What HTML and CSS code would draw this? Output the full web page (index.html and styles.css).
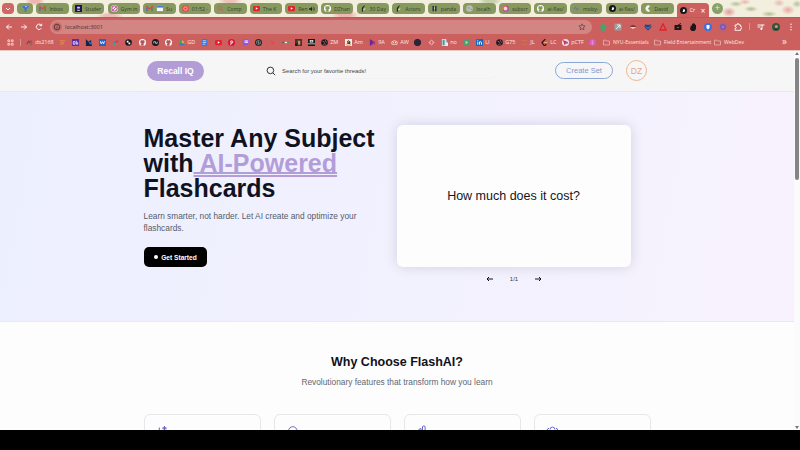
FILE: index.html
```
<!DOCTYPE html>
<html lang="en">
<head>
<meta charset="utf-8">
<title>Recall IQ</title>
<link rel="stylesheet" href="styles.css">
</head>
<body>
<svg class="defs" aria-hidden="true">
  <symbol id="gmail" viewBox="0 0 8 8"><path d="M1 7V2l3 2.500L7 2v5" fill="none" stroke="#d94a45" stroke-width="1.500"/><path d="M1 3v4" stroke="#4774d8" stroke-width="1.500"/><path d="M7 3v4" stroke="#3c9b55" stroke-width="1.500"/></symbol>
  <symbol id="github" viewBox="0 0 16 16"><circle cx="8" cy="8" r="8" fill="#fff"/><path d="M6 15v-3c-2 .4-2.500-.8-3.200-1.500M10 15v-3.500c0-.8-.2-1.200-.5-1.500 2-.3 3-1.200 3-3.300 0-.8-.3-1.500-.8-2 .1-.5.1-1.200-.1-1.700-.8 0-1.500.4-2.100.8a7 7 0 0 0-3 0c-.6-.4-1.300-.8-2.100-.8-.2.500-.2 1.200-.1 1.700-.5.500-.8 1.200-.8 2 0 2.100 1 3 3 3.300-.3.300-.5.700-.5 1.500V15z" fill="currentColor" stroke="currentColor"/></symbol>
  <symbol id="yt" viewBox="0 0 8 8"><rect y="1" width="8" height="6" rx="1.500" fill="#e4212d"/><path d="M3.200 2.600v2.800L5.600 4z" fill="#fff"/></symbol>
  <symbol id="disc" viewBox="0 0 8 8"><circle cx="4" cy="4" r="4" fill="#16181b"/><path d="M4 2.300a1.700 1.700 0 1 1-1 3z" fill="#fff"/></symbol>
  <symbol id="ball" viewBox="0 0 8 8"><circle cx="4" cy="4" r="3.800" fill="#1c1a20"/><path d="M1.500 2.500l2 .5L4 5M5 1.200l.5 2L7 4M2.500 6.500l2-1 1.500 1" stroke="#c27577" stroke-width=".7" fill="none"/></symbol>
  <symbol id="folder" viewBox="0 0 8 8"><path d="M.6 6.800V1.300h2.500l.9 1h3.400v4.500z" fill="none" stroke="#f4cfca" stroke-width=".7"/></symbol>
  <symbol id="feather" viewBox="0 0 8 8"><path d="M6 .4C2.500 1.500 1.500 4 2.200 7.500l1.300.1C2.700 5 3.500 3 6 .4z" fill="#171c18"/><path d="M3.700 5.500L6 4.300" stroke="#f3f3e4"/></symbol>
</svg>
<div class="screen">
  <div class="tabs">
    <span class="tab-menu"><svg viewBox="0 0 8 8"><path d="M2 3l2 2 2-2" fill="none" stroke="#fff"/></svg></span>
    <span class="tab pinned"><svg viewBox="0 0 8 8"><path d="M0 1h8L5 4.500V8L3 7V4.500z" fill="#3b6fd8"/><path d="M3 1h3L4.500 3z" fill="#a4c6ff"/></svg></span>
    <span class="tab"><svg><use href="#gmail"/></svg><b>Inbox</b></span>
    <span class="tab"><svg viewBox="0 0 8 8"><path d="M0 0h8v8H0z" fill="#231255"/><path d="M2.500 2h3v2h-3zM2.500 5.500h3v1h-3z" fill="#e6dcfb"/></svg><b>Studer</b></span>
    <span class="tab"><svg viewBox="0 0 8 8"><circle cx="4" cy="4" r="4" fill="#f4e5ef"/><circle cx="4" cy="4" r="3" fill="none" stroke="#a53a8d"/><path d="M1.500 6.500l5-5" stroke="#c54f79"/></svg><b>Gym in</b></span>
    <span class="tab"><svg><use href="#gmail"/></svg><svg viewBox="0 0 8 8"><path d="M1 1h7v6H1z" fill="#f3f7ff"/><path d="M1 1h7v2H1z" fill="#497cd6"/></svg><b>Su</b></span>
    <span class="tab"><svg viewBox="0 0 8 8"><circle cx="4" cy="4" r="4" fill="#e34b49"/><circle cx="4" cy="4" r="2" fill="none" stroke="#f7b3ae"/></svg><b>01:52 -</b></span>
    <span class="tab"><svg viewBox="0 0 8 8"><circle cx="3.500" cy="3.500" r="2.200" fill="none" stroke="#b8655d"/><path d="M5 5l2.500 2.500" stroke="#b8655d"/></svg><b>Comp</b></span>
    <span class="tab"><svg><use href="#yt"/></svg><b>The K</b></span>
    <span class="tab"><svg><use href="#yt"/></svg><b class="short">Ren</b><svg class="sound" viewBox="0 0 8 8"><path d="M0 3h2l2-2v6L2 5H0z" fill="#20291c"/><path d="M5 2.500q1.500 1.500 0 3M6 1q3 3 0 6" fill="none" stroke="#20291c" stroke-width=".7"/></svg></span>
    <span class="tab"><svg><use href="#github"/></svg><b>DZhan</b></span>
    <span class="tab"><svg><use href="#feather"/></svg><b>30 Day</b></span>
    <span class="tab"><svg><use href="#feather"/></svg><b>Actors</b></span>
    <span class="tab"><svg viewBox="0 0 8 8"><path d="M2.500 1v6M5.500 1v6" stroke="#1c1c49" stroke-width="1.500"/><path d="M3.400 3.500h1.300" stroke="#fff"/></svg><b>panda</b></span>
    <span class="tab"><svg viewBox="0 0 8 8"><circle cx="4" cy="4" r="3.800" fill="#b9bdb4"/><path d="M2 2l2 1-1 2zM5 4l2 1-1 1z" fill="#8c9484"/></svg><b>localh</b></span>
    <span class="tab"><svg viewBox="0 0 8 8"><circle cx="4" cy="4" r="3" fill="#f5d5dd" stroke="#b34c9b" stroke-width="1.500"/><path d="M1.500 6A3 3 0 0 1 4 1" fill="none" stroke="#e77a45" stroke-width="1.500"/></svg><b>subscr</b></span>
    <span class="tab"><svg><use href="#github"/></svg><b>ai-flas/</b></span>
    <span class="tab"><svg viewBox="0 0 8 8"><path d="M1 5l2-3 1 4 1-2 2 1" stroke="#5b78a7" fill="none"/></svg><b>moby-</b></span>
    <span class="tab"><svg><use href="#disc"/></svg><b>ai-flas/</b></span>
    <span class="tab"><svg viewBox="0 0 8 8"><path d="M7 1a3.500 3.500 0 1 0 0 6L4.500 4z" fill="#f1f4e6"/></svg><b>David</b></span>
    <span class="tab active"><svg><use href="#disc"/></svg><b>Cr</b><i>×</i></span>
    <span class="new-tab">+</span>
  </div>
  <div class="toolbar">
    <svg class="nav-icon" viewBox="0 0 8 8"><path d="M7 4H1.500M4 1.500L1.500 4 4 6.500"/></svg>
    <svg class="nav-icon" viewBox="0 0 8 8"><path d="M1 4h5.500M4 1.500L6.500 4 4 6.500"/></svg>
    <svg class="nav-icon" viewBox="0 0 8 8"><path d="M6.500 5A2.700 2.700 0 1 1 6 2l.7.7M6.700.7v2H4.500"/></svg>
    <div class="address"><span class="site"><svg viewBox="0 0 8 8"><circle cx="4" cy="4" r="2.800" fill="none" stroke="#563335" stroke-width=".9"/><path d="M4 3.500v2M4 2.200v.6" stroke="#563335" stroke-width=".8"/></svg></span><span>localhost:3001</span><svg class="star" viewBox="0 0 8 8"><path d="M4 .8l.9 2 2.200.2-1.600 1.500.5 2.200L4 5.600 2 6.700l.5-2.200L.9 3l2.200-.2z" fill="none" stroke="#66393b" stroke-width=".7"/></svg></div>
    <div class="extensions">
      <svg viewBox="0 0 8 8"><path d="M4 0l1.300 1.500L8 3 6.500 5 6 8H2L1.500 5 0 3l2.700-1.500z" fill="#58996d"/></svg>
      <svg viewBox="0 0 8 8"><path d="M.5.5h7v7h-7z" fill="#9aa09f"/><path d="M2 6l4-4M3 2h3v3" stroke="#e9eeee" fill="none"/></svg>
      <svg viewBox="0 0 8 8"><path d="M.7 4q3.300-4 6.600 0z" fill="#743638"/><path d="M.7 4h6.600L4 6z" fill="#f2ccc6"/></svg>
      <svg viewBox="0 0 8 8"><path d="M4 7.500L.5 4 1 1.500 4 2l3-.5.5 2.500z" fill="#253d86"/><path d="M2 3.500l2 2 3-3" stroke="#53a6d6" fill="none"/></svg>
      <svg viewBox="0 0 8 8"><path d="M4 .8L7 7H1z" fill="none" stroke="#e22128" stroke-width="1.300"/></svg>
      <svg viewBox="0 0 8 8"><path d="M.5 2h7v5h-7z" fill="#201517"/><path d="M4 2l3-1.500M4 3.500v2" stroke="#201517"/><circle cx="4" cy="4.500" r=".8" fill="#ca6b69"/></svg>
      <svg viewBox="0 0 8 8"><path d="M1.500 4l.5-2 1 1V.8h1V.3h1v.5h1v1h1V6L5.500 8h-3L1 6z" fill="#19191c"/></svg>
      <svg viewBox="0 0 8 8"><circle cx="4" cy="4" r="4" fill="#3c72dc"/><path d="M2.500 2h3v3L4 6.500 2.500 5z" fill="#fff"/></svg>
      <svg viewBox="0 0 8 8"><path d="M4 .3l1 1 1.500-.1.100 1.500L7.800 4l-1.200 1.300-.1 1.500L5 6.700 4 7.800 3 6.700l-1.500.1-.1-1.500L.2 4l1.200-1.300-.1-1.500L3 1.300z" fill="#7b59bd"/><circle cx="4" cy="4" r="1.200" fill="#9c79cf"/></svg>
      <svg viewBox="0 0 8 8"><path d="M1 2h2q-.2-1.500 1-1.500T5 2h1.700v1.700q1.300 0 1.300 1T6.700 5.700v1.600H1V5.500q1.300 0 1.300-.9T1 3.700z" fill="none" stroke="#fff" stroke-width=".9"/></svg>
      <span class="rule"></span>
      <svg viewBox="0 0 8 8"><path d="M.5 2h5M.5 4h3M5 6V2h2.500" stroke="#fff" stroke-width=".9" fill="none"/><circle cx="4.300" cy="6" r="1" fill="#fff"/></svg>
      <svg viewBox="0 0 8 8"><circle cx="4" cy="4" r="4" fill="#31563c"/><circle cx="4.300" cy="3.600" r="1.500" fill="#d29879"/><path d="M1.500 7q2.500-3.500 5 0" fill="#263744"/></svg>
      <svg viewBox="0 0 8 8"><g fill="#fff"><circle cx="4" cy="1.300" r=".7"/><circle cx="4" cy="4" r=".7"/><circle cx="4" cy="6.700" r=".7"/></g></svg>
    </div>
  </div>
  <div class="bookmarks">
    <span><svg viewBox="0 0 8 8"><path d="M1 1h2v2H1zM5 1h2v2H5zM1 5h2v2H1zM5 5h2v2H5z" fill="none" stroke="#f8d9d4"/></svg></span>
    <span class="rule"></span>
    <span><svg viewBox="0 0 8 8"><path d="M1 6l2-4 1 3" stroke="#4b3f83" fill="none"/><path d="M4 2h3v2H4z" fill="#e22a38"/><path d="M5 5h2v2H5z" fill="#34924f"/></svg>ds2168</span>
    <span><svg viewBox="0 0 8 8"><path d="M1 2h6M2 4h3M1 6h2l3-1" stroke="#eb8c4d" fill="none"/></svg></span>
    <span><svg viewBox="0 0 8 8"><path d="M0 0h8v8H0z" fill="#5c2ca0"/><path d="M1.500 3h2v3h-2zM5 2v4h1.500V3.500" stroke="#fff" stroke-width=".8" fill="none"/></svg></span>
    <span><svg viewBox="0 0 8 8"><path d="M1 0l3 3 3-2v3l1 4H1z" fill="#14233f"/><path d="M4 3l3 1-1 3z" fill="#167ee2"/></svg></span>
    <span><svg viewBox="0 0 8 8"><path d="M0 0h8v8H0z" fill="#1e65cb"/><path d="M1.500 2.500l1 3L4 3l1.300 2.500 1-3" stroke="#fff" fill="none"/></svg></span>
    <span><svg viewBox="0 0 8 8"><path d="M2 3l2 2" stroke="#4183e9" stroke-width="2"/><path d="M4 4l3-2" stroke="#e02f3e" stroke-width="1.500"/><path d="M2 7l3-2" stroke="#55a56b" stroke-width="1.500"/></svg></span>
    <span><svg viewBox="0 0 8 8"><circle cx="4" cy="4" r="3.800" fill="#17191d"/><path d="M2 2h2v2H2zM4 4h2v2H4z" fill="#fff"/></svg></span>
    <span><svg><use href="#github"/></svg></span>
    <span><svg viewBox="0 0 8 8"><circle cx="4" cy="4" r="4" fill="#17191c"/><path d="M2 5V3h2v2h2V3" stroke="#ddd" fill="none" stroke-width=".8"/></svg></span>
    <span><svg><use href="#github"/></svg></span>
    <span><svg viewBox="0 0 8 8"><path d="M3 1h2L3 5H1z" fill="#34a65a"/><path d="M5 1l3 4H5.500L4 3z" fill="#e7ae3c"/><path d="M2 5h6L7 7H1z" fill="#387bce"/></svg>GD</span>
    <span><svg viewBox="0 0 8 8"><path d="M1 0h6v8H1z" fill="#3976dc"/><path d="M2 2h4M2 4h4M2 6h3" stroke="#e4efff" stroke-width=".8"/></svg></span>
    <span><svg><use href="#yt"/></svg></span>
    <span><svg viewBox="0 0 8 8"><circle cx="4" cy="4" r="4" fill="#d81633"/><path d="M3 7l1-4M3 4q-.5-2 1-2t1.500 1.400T4 5" stroke="#fff" stroke-width=".9" fill="none"/></svg></span>
    <span><svg viewBox="0 0 8 8"><path d="M1 0h7v5L5 7H3v1L1 7z" fill="#9255e3"/><path d="M3 1.500h4v3H3z" fill="#efe2ff"/><path d="M4.300 2v1.500M6 2v1.500" stroke="#7543bb" stroke-width=".6"/></svg></span>
    <span><svg viewBox="0 0 8 8"><circle cx="4" cy="4" r="4" fill="#222327"/><path d="M4 1.400l2.200 1.300v2.600L4 6.600 1.800 5.300V2.700zM4 1.400v5M1.800 2.700l4.400 2.600" fill="none" stroke="#aaa" stroke-width=".6"/></svg></span>
    <span><svg viewBox="0 0 8 8"><path d="M2 2h4v3l-2 2-2-2z" fill="#dc5148"/></svg></span>
    <span><svg viewBox="0 0 8 8"><path d="M0 4h3" stroke="#5e6258" stroke-width="1.500"/><path d="M3 4h3" stroke="#f3f0d5" stroke-width="1.500"/><path d="M6 4h2" stroke="#539558" stroke-width="1.500"/></svg></span>
    <span><svg viewBox="0 0 8 8"><path d="M0 0h8v8H0z" fill="#4b3326"/><path d="M3 2h3v4L4 7z" fill="#c99171"/><path d="M0 5h3v3H0z" fill="#1a2521"/></svg></span>
    <span><svg viewBox="0 0 8 8"><path d="M0 0h8v8H0z" fill="#171a1b"/><path d="M2 1h4v3H2zM0 5h8v1H0z" fill="#ece8df"/><path d="M3 2h2v1H3z" fill="#222"/></svg></span>
    <span><svg><use href="#ball"/></svg>ZM</span>
    <span><svg viewBox="0 0 8 8"><path d="M0 0h8v8H0z" fill="#f5eee5"/><path d="M2.500 3q1.500-2 3 0v2.500M5.500 3.500q-3 0-3 1.200T5.500 5" fill="none" stroke="#181818"/><path d="M1 6.500q3 1.500 6 0" stroke="#de872d" fill="none"/></svg>Am</span>
    <span><svg viewBox="0 0 8 8"><path d="M1 0l6 4-6 4z" fill="#642b9c"/><path d="M3 4h4v3z" fill="#c43184"/></svg>9A</span>
    <span><svg viewBox="0 0 8 8"><path d="M1 3q3-2 6 0v3H1z" fill="none" stroke="#f0d9c6"/><circle cx="3" cy="4" r=".6" fill="#fff"/><circle cx="5.200" cy="4" r=".6" fill="#fff"/></svg>AW</span>
    <span><svg viewBox="0 0 8 8"><path d="M2.300 0h3.400L8 2.300v3.400L5.700 8H2.300L0 5.700V2.300z" fill="#27263a"/></svg></span>
    <span><svg viewBox="0 0 8 8"><path d="M4 .5L7.500 4 4 7.500.5 4z" fill="#eda9a4"/><path d="M4 2v4M2.500 4h3" stroke="#c45a70"/></svg></span>
    <span><svg viewBox="0 0 8 8"><path d="M1 0h5l1 8H1z" fill="#bddde6"/><path d="M2 1h2v6H2z" fill="#518da5"/><path d="M5 4h3v4H5z" fill="#e7eef0"/></svg>no</span>
    <span><svg viewBox="0 0 8 8"><circle cx="4" cy="4" r="4" fill="#519b72"/><path d="M3 2l3 2-3 2z" fill="#bbddb5"/></svg></span>
    <span><svg viewBox="0 0 8 8"><path d="M0 0h8v8H0z" fill="#1766bd"/><path d="M2 3v3.500M2 1v1M4 6.500V3M4 4q2-2 2.300 0v2.500" fill="none" stroke="#fff"/></svg>LI</span>
    <span><svg><use href="#ball"/></svg>G75</span>
    <span><svg viewBox="0 0 8 8"><path d="M1 2h6M1 6h6" stroke="#d77745" stroke-width=".8"/></svg>JL</span>
    <span><svg viewBox="0 0 8 8"><path d="M5 0L1 4l3 4 2-2" stroke="#24191b" stroke-width="1.300" fill="none"/><path d="M3.500 4h4" stroke="#f1b254"/></svg>LC</span>
    <span><svg viewBox="0 0 8 8"><circle cx="4" cy="4" r="4" fill="#f1dfe5"/><path d="M1 1l5 2-3 4z" fill="#d33053"/><path d="M4 4l3-1-1 3z" fill="#7853a5"/></svg>pCTF</span>
    <span><svg viewBox="0 0 8 8"><circle cx="4" cy="4" r="3.800" fill="#d45cbf"/><path d="M2 2l4 4M6 2L2 6M4 1v6" stroke="#f2a1dd" stroke-width=".6"/></svg></span>
    <span class="dir"><svg><use href="#folder"/></svg>NYU-Essentials</span>
    <span class="dir"><svg><use href="#folder"/></svg>Field Entertainment</span>
    <span class="dir"><svg><use href="#folder"/></svg>WebDev</span>
    <span class="more">»</span>
  </div>
  <div class="viewport">
    <main>
      <header>
        <a class="brand">Recall IQ</a>
        <div class="search"><svg viewBox="0 0 10 10"><circle cx="4.400" cy="4.400" r="3.300"/><path d="M6.900 6.900l2.300 2.300"/></svg><span>Search for your favorite threads!</span></div>
        <a class="create">Create Set</a>
        <span class="avatar">DZ</span>
      </header>
      <section class="hero">
        <div class="pitch">
          <h1>Master Any Subject<br>with<em> AI-Powered</em><br>Flashcards</h1>
          <p>Learn smarter, not harder. Let AI create and optimize your<br>flashcards.</p>
          <a class="start"><i></i>Get Started</a>
        </div>
        <div class="demo">
          <div class="flashcard">How much does it cost?</div>
          <div class="pager"><svg viewBox="0 0 8 8"><path d="M7 4H1M3 2L1 4l2 2"/></svg><span>1/1</span><svg viewBox="0 0 8 8"><path d="M1 4h6M5 2l2 2-2 2"/></svg></div>
        </div>
      </section>
      <section class="features">
        <h2>Why Choose FlashAI?</h2>
        <p>Revolutionary features that transform how you learn</p>
        <div class="cards">
          <article><svg viewBox="0 0 12 12"><path d="M7.500 1v4.500M5.200 3.200h4.600M6.300 2l2.400 2.400M8.700 2L6.300 4.400M2.300 2.500v4"/></svg></article>
          <article><svg viewBox="0 0 12 12"><path d="M1.500 6a4.300 4.300 0 1 1 8.600 0L8 9H4z"/></svg></article>
          <article><svg viewBox="0 0 12 12"><path d="M5.500 10V1.500q1.300-1.200 2.600 0V10M1.800 10V4.500l2.200-1v6.500"/></svg></article>
          <article><svg viewBox="0 0 12 12"><path d="M2.500 5.500a2.400 2.400 0 1 1 4.800 0" transform="translate(.6 -1)"/><path d="M.3 5q.5-2 1.800-1.600M10.700 5q-.5-2-1.800-1.600"/></svg></article>
        </div>
      </section>
    </main>
    <aside class="scrollbar"><i class="up"></i><span></span><i class="down"></i></aside>
  </div>
</div>
</body>
</html>
```
FILE: styles.css
```
* { box-sizing: border-box; }
body { margin: 0; width: 800px; height: 450px; overflow: hidden; background: #000; font-family: "Liberation Sans", Arial, sans-serif; }
.defs { display: none; }
.screen { display: flex; flex-direction: column; height: 430px; overflow: hidden; background: #fdfdfe; }
svg { flex: none; }

.tabs {
  display: flex; align-items: center; gap: 3.200px; flex: none; height: 17px; padding-left: 2px;
  background:
    radial-gradient(ellipse 10px 5px at 35px 1px, #edb5b0 40%, transparent 100%),
    radial-gradient(ellipse 14px 4px at 110px 16px, #eebdb9 40%, transparent 100%),
    radial-gradient(ellipse 12px 4px at 230px 1px, #edc2ba 40%, transparent 100%),
    radial-gradient(ellipse 14px 5px at 345px 15px, #eeb6b4 40%, transparent 100%),
    radial-gradient(ellipse 12px 4px at 490px 1px, #c6cfa9 40%, transparent 100%),
    radial-gradient(ellipse 7px 5px at 729px 12px, #e2a29d 10%, transparent 100%),
    radial-gradient(ellipse 7px 3px at 736px 4px, #bbc59f 10%, transparent 100%),
    radial-gradient(ellipse 6px 3px at 745px 2px, #edb9b2 10%, transparent 100%),
    radial-gradient(ellipse 7px 3px at 751px 9px, #b5c096 10%, transparent 100%),
    radial-gradient(ellipse 8px 3px at 769px 14px, #b9c39d 10%, transparent 100%),
    radial-gradient(ellipse 6px 4px at 779px 3px, #e9bdb5 10%, transparent 100%),
    radial-gradient(ellipse 7px 5px at 788px 10px, #e8aea8 10%, transparent 100%),
    radial-gradient(ellipse 5px 4px at 797px 4px, #bbc59f 10%, transparent 100%),
    #f3efdf;
}
.tab-menu { display: flex; align-items: center; justify-content: center; flex: none; width: 12px; height: 11px; border-radius: 4px; background: #cf6766; }
.tab-menu svg { width: 8px; height: 8px; }
.tab { display: flex; align-items: center; gap: 3px; flex: none; width: 32.400px; height: 11.500px; padding: 0 0 0 3px; border-radius: 4px; background: #87995f; color: #34422b; font: 5.200px "Open Sans", "Noto Sans", sans-serif; }
.tab svg { width: 7px; height: 7px; color: #87995f; }
.tab b { font-weight: 400; white-space: nowrap; }
.tab .short { width: 8px; }
.tab b + .sound { width: 6px; height: 6px; }
.tab.pinned { width: 16px; padding-left: 4.500px; }
.tab.active { width: 32px; height: 14px; margin: 3px 0 0; border-radius: 4px 4px 0 0; background: #cb605f; color: #fff; }
.tab.active b { width: 8px; }
.tab.active i { font: 8px "Noto Sans", sans-serif; }
.new-tab { display: flex; align-items: center; justify-content: center; width: 11px; height: 11px; border-radius: 50%; background: #87a168; color: #e5edce; font-size: 9px; line-height: 1; }

.toolbar { display: flex; align-items: center; flex: none; height: 18px; padding-left: 5px; border-top: 1px solid #c95352; background: #cb605f; }
.nav-icon { width: 8px; height: 8px; margin-right: 7px; fill: none; stroke: #fff; stroke-width: .9; }
.address { display: flex; align-items: center; gap: 3px; width: 542px; height: 14px; padding: 0 6px 0 2px; border-radius: 7px; background: #d28582; color: #5f3638; font: 5.600px "Noto Sans", sans-serif; }
.site { display: grid; place-items: center; width: 10px; height: 10px; border-radius: 50%; background: #c46e6c; }
.site svg, .star { width: 8px; height: 8px; }
.star { margin-left: auto; }
.extensions { display: flex; align-items: center; gap: 7px; margin-left: 7px; }
.extensions svg { width: 8px; height: 8px; }
.extensions .rule { margin: 0 -.5px 0 0; }
.rule { width: 1px; height: 7px; background: #dc9290; }

.bookmarks {
  display: grid; align-items: center; flex: none; height: 15px; padding: 0 0 1px 7px;
  grid-template-columns: 13px 6px 33px 13px 13px 13.500px 13.500px 13px 14px 13px 13px 13px 23px 14px 13px 14px 12.500px 14.500px 13px 13px 13px 13px 24px 24px 22px 23px 14px 13px 22px 13px 20px 25px 20px 21px 27px 14px 51px 60px 68px 10px;
  background: #cb605f; color: #fbe5e1; font: 5.500px "Open Sans", "Noto Sans", sans-serif;
}
.bookmarks > span:not(.rule) { display: flex; align-items: center; gap: 2.200px; white-space: nowrap; }
.bookmarks > .dir:not(.rule) { gap: 3px; font-size: 5.150px; }
.bookmarks svg { width: 7px; height: 7px; color: #b35356; }
.bookmarks > .more:not(.rule) { padding-bottom: 1px; font-size: 10px; line-height: 9px; }

.viewport { display: flex; flex: 1; min-height: 0; border-top: 1px solid #eac5c6; }
main { width: 794px; overflow: hidden; }
header { display: flex; align-items: center; height: 41px; padding: 0 0 1px 147px; border-bottom: 1px solid #e8e8ef; background: #f6f6f7; }
.brand { display: grid; place-items: center; width: 57px; height: 20px; border-radius: 10px; background: #b39dd7; color: #fff; font-size: 8.500px; font-weight: 700; }
.search { display: flex; align-items: center; gap: 6px; width: 231px; height: 14px; margin-left: 62px; border-radius: 7px; color: #424650; font-size: 5.900px; box-shadow: 0 1px 1px -1px #dedfe5; }
.search svg { width: 10px; height: 10px; fill: none; stroke: #32343c; }
.create { display: grid; place-items: center; width: 58px; height: 17px; margin-left: 58px; border: 1px solid #8ba6d8; border-radius: 9px; color: #7f9bd0; font-size: 7.500px; }
.avatar { display: grid; place-items: center; width: 21px; height: 21px; margin-left: 13px; border: 1px solid #edb58f; border-radius: 50%; color: #e8a47a; font-size: 8.500px; }
.hero { display: flex; height: 230px; padding-left: 144px; border-bottom: 1px solid #e9e9ef; background: linear-gradient(100deg, #eceffe 0%, #f2f1fe 50%, #f5f2fe 80%, #f9f2fe 100%); }
.pitch { width: 253px; padding-top: 33.500px; }
h1 { margin: 0 0 0 -.5px; color: #10131f; font-size: 25px; line-height: 25px; white-space: nowrap; }
h1 em { color: #b39dd9; font-style: normal; text-decoration: underline double 2px; text-underline-offset: 0; text-decoration-skip-ink: none; }
.pitch p { margin: 10.500px 0 0 -.5px; color: #555b69; font-size: 8.330px; line-height: 11.500px; white-space: nowrap; }
.start { display: flex; align-items: center; justify-content: center; gap: 3px; width: 63px; height: 20px; margin-top: 13px; border-radius: 5px; background: #000; color: #fff; font-size: 6.600px; font-weight: 700; }
.start i { width: 4px; height: 4px; border-radius: 50%; background: #fff; }
.demo { width: 234px; padding-top: 33px; }
.flashcard { display: grid; place-items: center; height: 142px; padding-right: 1px; border-radius: 6px; background: #fdfdfe; box-shadow: 0 0 14px #00001f22; color: #15151b; font-size: 12.500px; }
.pager { display: flex; align-items: center; justify-content: center; gap: 16px; height: 24px; color: #373941; font-size: 6px; }
.pager svg { width: 8px; height: 8px; fill: none; stroke: #111218; }
.features { padding-top: 32px; text-align: center; }
h2 { margin: 0; color: #101119; font-size: 12.500px; line-height: 16px; }
.features p { margin: 6px 0 0; color: #626773; font-size: 8.330px; line-height: 12px; }
.cards { display: grid; grid-template-columns: repeat(4, 117px); gap: 13px; padding-left: 144px; margin-top: 26px; }
article { height: 60px; padding: 10px 12px; border: 1px solid #e6e7eb; border-radius: 6px; text-align: left; }
article svg { display: block; width: 12px; height: 12px; fill: none; stroke: #6866cb; stroke-width: 1; }
.scrollbar { display: flex; flex-direction: column; align-items: center; width: 6px; padding: 1px 0; background: #fbfbfc; }
.scrollbar span { width: 4px; height: 122px; margin-top: 3px; border-radius: 2px; background: #858587; }
.scrollbar .up { border: 2px solid transparent; border-top: 0; border-bottom: 3px solid #77777a; }
.scrollbar .down { margin-top: auto; border: 2px solid transparent; border-bottom: 0; border-top: 3px solid #77777a; }
```
